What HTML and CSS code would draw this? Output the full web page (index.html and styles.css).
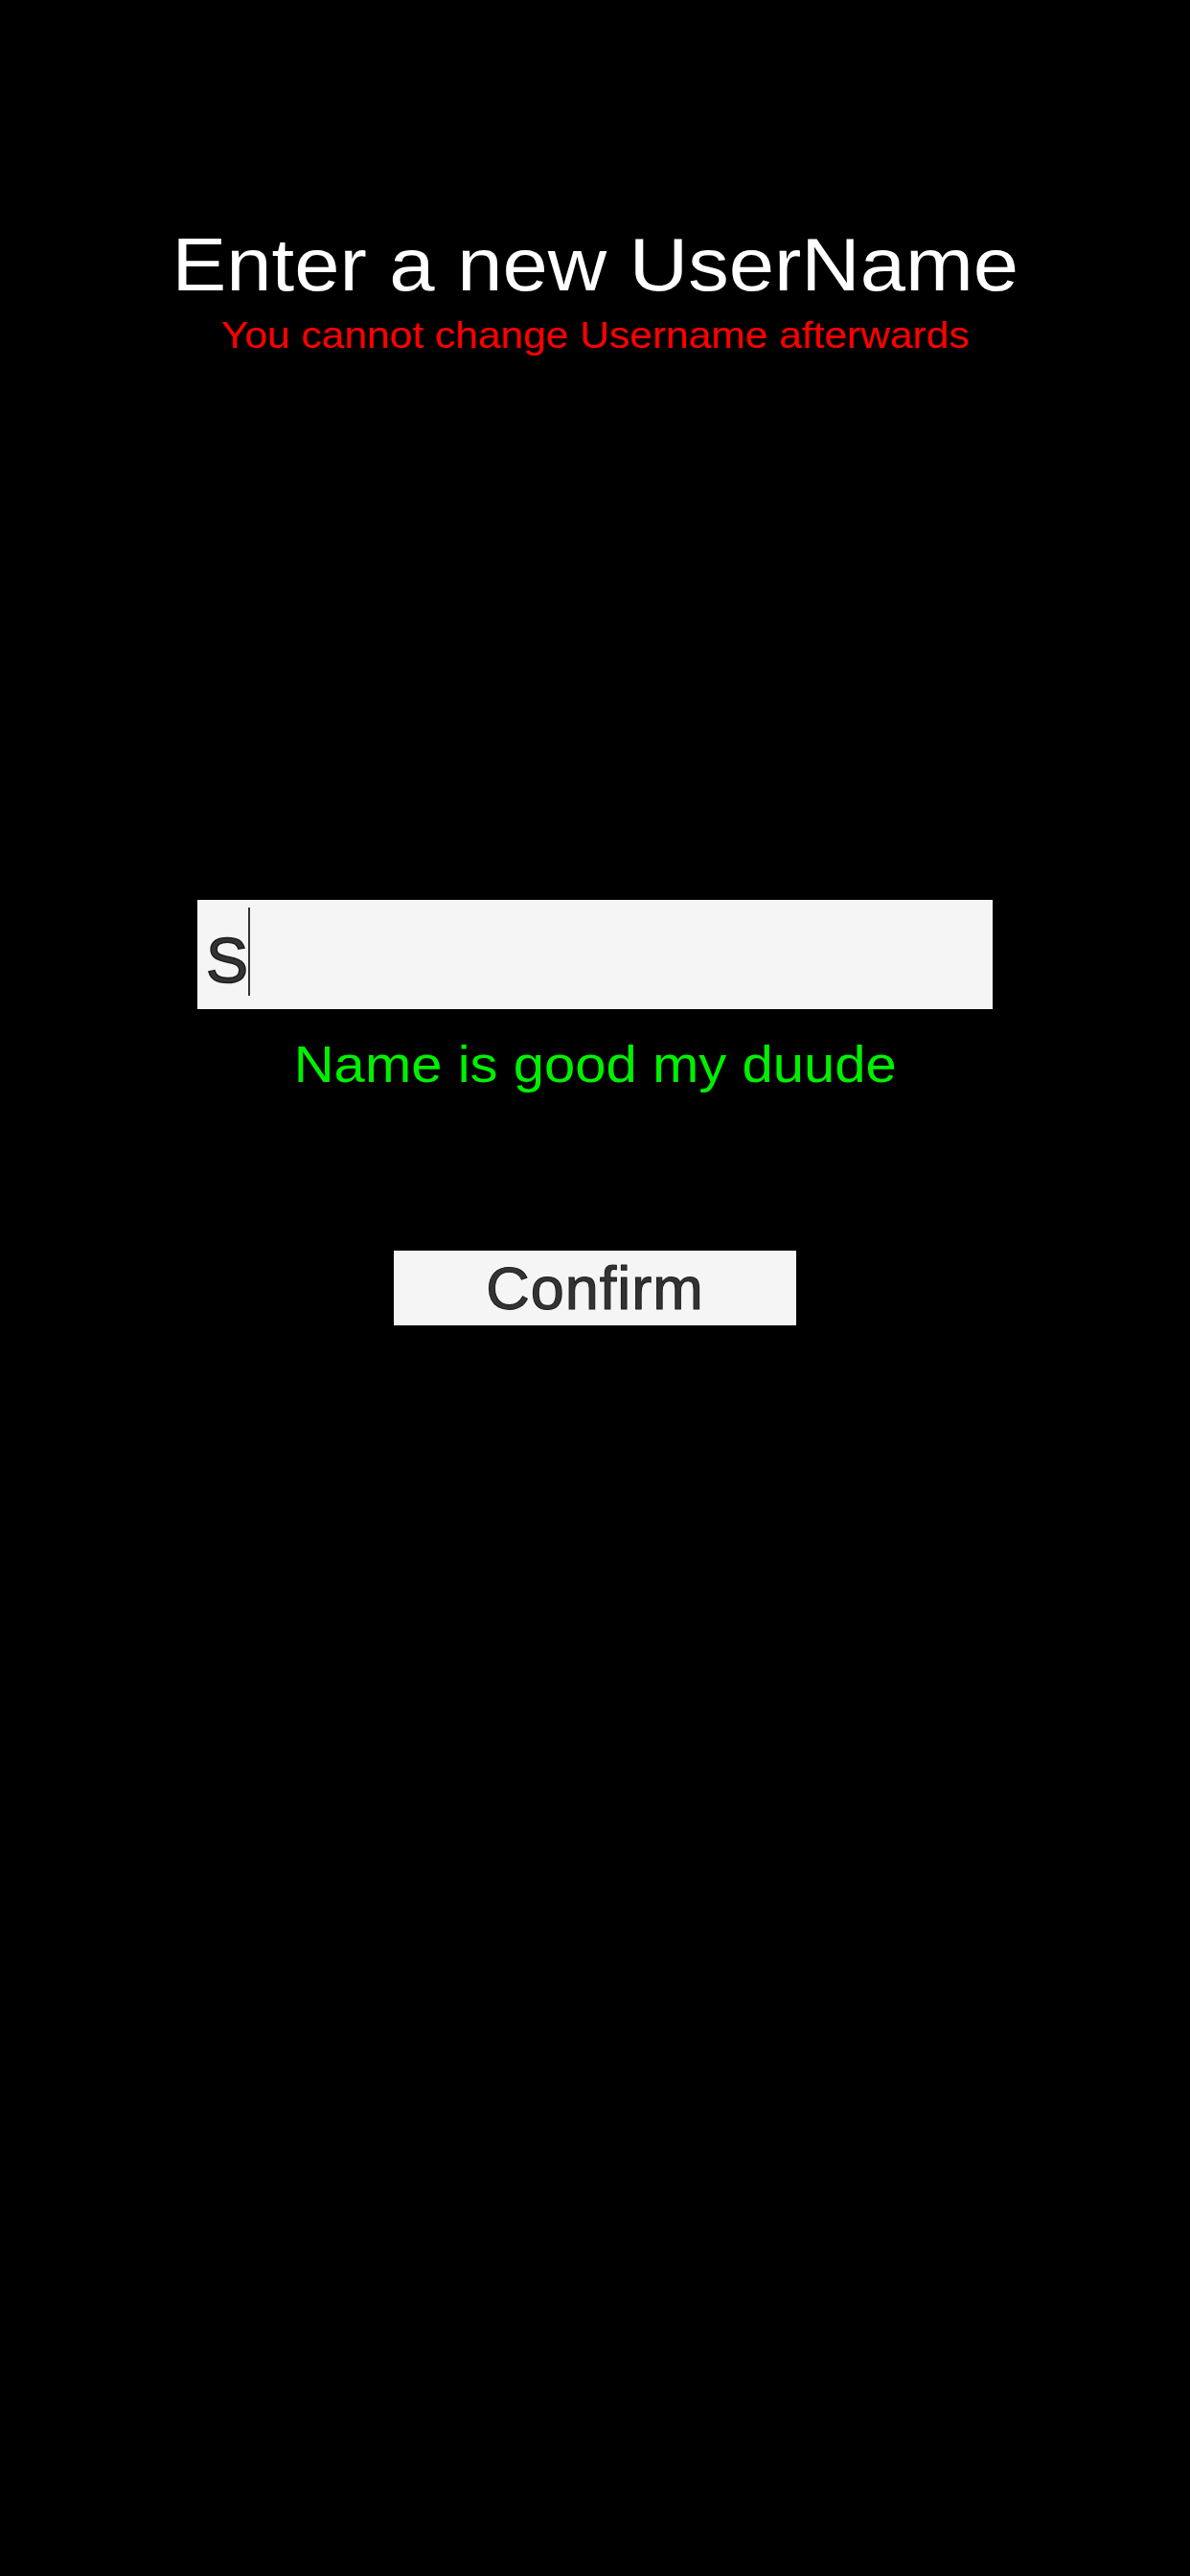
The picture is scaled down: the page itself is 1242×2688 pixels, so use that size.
FILE: index.html
```html
<!DOCTYPE html>
<html lang="en">
<head>
<meta charset="utf-8">
<title>Enter a new UserName</title>
<link rel="stylesheet" href="styles.css">
</head>
<body>
<main class="screen">
  <header class="heading">
    <h1 class="title">Enter a new UserName</h1>
    <p class="warning">You cannot change Username afterwards</p>
  </header>
  <div class="field">
    <span class="field-value">S</span><span class="caret"></span>
  </div>
  <p class="status">Name is good my duude</p>
  <button class="confirm" type="button">Confirm</button>
</main>
</body>
</html>
```

FILE: styles.css
```css
html, body {
  margin: 0;
  padding: 0;
  background: #000;
}

body {
  font-family: "Liberation Sans", Arial, sans-serif;
}

.screen {
  min-height: 2688px;
  box-sizing: border-box;
  padding-top: 237px;
  display: flex;
  flex-direction: column;
  align-items: center;
}

.heading {
  display: flex;
  flex-direction: column;
  align-items: center;
}

.title {
  margin: 0;
  font-size: 78px;
  line-height: 78px;
  font-weight: normal;
  color: #ffffff;
  white-space: nowrap;
  transform: scaleX(1.09);
}

.warning {
  margin: 15px 0 0;
  font-size: 39px;
  line-height: 39px;
  color: #ff0000;
  white-space: nowrap;
  transform: scaleX(1.09);
}

.field {
  margin-top: 570px;
  width: 830px;
  height: 114px;
  box-sizing: border-box;
  padding-left: 9px;
  background: #f5f5f5;
  display: flex;
  align-items: center;
}

.field-value {
  margin-top: 11px;
  font-size: 66px;
  line-height: 66px;
  color: #333333;
  -webkit-text-stroke: 1.6px #1e1e1e;
}

.caret {
  width: 2px;
  height: 92px;
  margin-bottom: 6px;
  background: #333333;
}

.status {
  margin: 31px 0 0;
  font-size: 53px;
  line-height: 53px;
  color: #00f000;
  white-space: nowrap;
  transform: scaleX(1.095);
}

.confirm {
  margin-top: 168px;
  width: 420px;
  height: 78px;
  padding: 0;
  border: 0;
  border-radius: 0;
  background: #f5f5f5;
  font-family: "Liberation Sans", Arial, sans-serif;
  font-size: 63px;
  line-height: 63px;
  letter-spacing: 1px;
  color: #333333;
  -webkit-text-stroke: 1.1px #1e1e1e;
}
```
